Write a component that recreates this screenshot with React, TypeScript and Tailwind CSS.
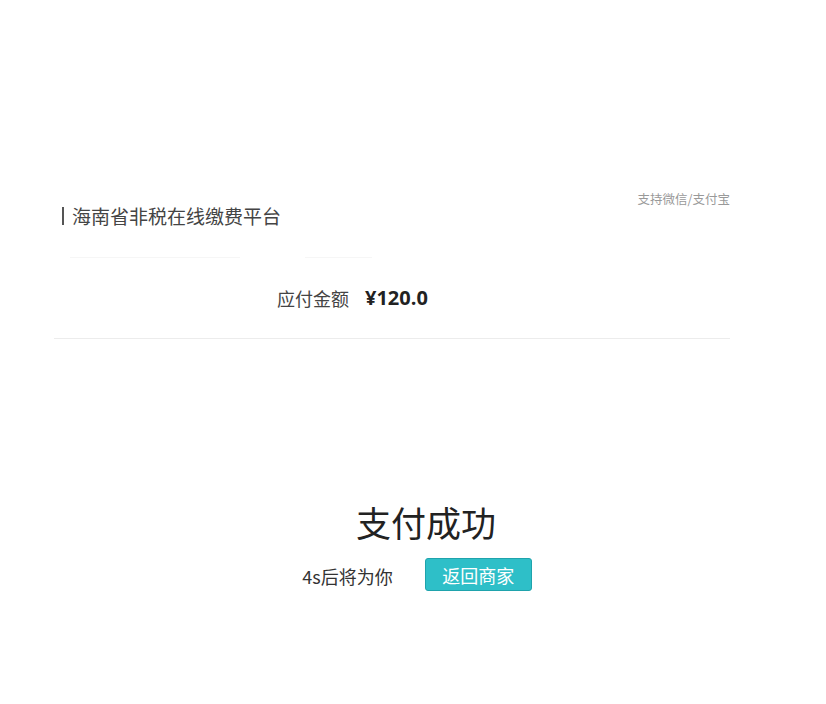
export default function App() {
  return (
    <div className="w-full h-[704px] bg-white font-['Noto_Sans_CJK_SC',sans-serif] text-[#333]">
      <div className="ml-[58px] w-[674px] pt-[188px]">
        <div className="flex justify-between items-start">
          <div className="mt-[15px] flex items-center text-[19px] leading-[25px] text-[#444]">
            <span className="inline-block w-[2px] h-[18px] bg-[#555] mr-[8px] ml-[4px]"></span>
            海南省非税在线缴费平台
          </div>
          <div className="text-[12.5px] leading-[16px] text-[#999] mr-[2px] mt-[3px]">支持微信/支付宝</div>
        </div>
        <div className="flex mt-[29px]">
          <div className="ml-[12px] w-[170px] h-[1px] bg-[#f6f6f6]"></div>
          <div className="ml-[65px] w-[67px] h-[1px] bg-[#f6f6f6]"></div>
        </div>
        <div className="mt-[27px] pl-[219px] flex items-center text-[18px] leading-[26px]">
          <span className="text-[#444]">应付金额</span>
          <span className="ml-[16px] text-[20px] font-bold text-[#222] font-['Open_Sans','Noto_Sans_CJK_SC',sans-serif]">¥120.0</span>
        </div>
        <div className="mt-[27px] ml-[-4px] w-[676px] h-[1px] bg-[#ececec]"></div>
      </div>
      <div className="mt-[161px] flex flex-col items-center ml-[26px]">
        <div className="text-[35px] leading-[44px] text-[#222]">支付成功</div>
        <div className="mt-[14px] flex items-center">
          <span className="text-[18px] text-[#333] ml-[-18px] mt-[4px]">4s后将为你</span>
          <button className="ml-[32px] w-[107px] h-[33px] rounded-[3px] bg-[#2ebfc8] border border-[#1fa3ac] text-white text-[18px] leading-[20px]">
            返回商家
          </button>
        </div>
      </div>
    </div>
  );
}
